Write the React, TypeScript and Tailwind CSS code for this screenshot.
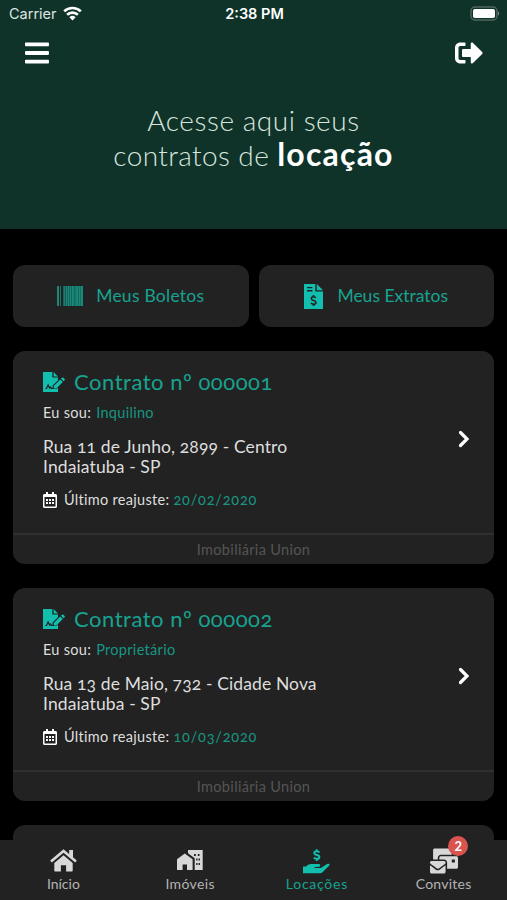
import { FaBars, FaMailBulk, FaRegCalendarAlt, FaSignOutAlt } from "react-icons/fa";

const contracts = [
  { number: "000001", role: "Inquilino", address: "Rua 11 de Junho, 2899 - Centro", date: "20/02/2020" },
  { number: "000002", role: "Proprietário", address: "Rua 13 de Maio, 732 - Cidade Nova", date: "10/03/2020" },
];

function StatusBar() {
  return (
    <div className="grid h-[27px] grid-cols-3 items-center pl-[9px] pr-[7px] font-['Inter',sans-serif] text-white">
      <div className="flex items-center gap-[6px] text-[14.5px] text-[#dce4e1]">
        Carrier
        <svg width="19" height="15" viewBox="0 0 19 15" fill="none" stroke="#fff" strokeWidth="2.6">
          <path d="M1.2 5.4a12 12 0 0 1 16.6 0M4.1 8.8a7.8 7.8 0 0 1 10.8 0" />
          <path d="M9.5 14.4 6.4 11.3a4.5 4.5 0 0 1 6.2 0Z" fill="#fff" stroke="none" />
        </svg>
      </div>
      <p className="text-center text-[14.5px] font-semibold">2:38 PM</p>
      <svg className="justify-self-end" width="30" height="15" viewBox="0 0 30 15">
        <rect x="1" y="1" width="26" height="13" rx="4" fill="none" stroke="#52685f" strokeWidth="1.4" />
        <rect x="3" y="3" width="22" height="9" rx="1.8" fill="#fff" />
        <path d="M28 5.3a2.6 2.6 0 0 1 0 4.4Z" fill="#73877f" />
      </svg>
    </div>
  );
}

function BarcodeIcon() {
  return (
    <svg width="26" height="20" viewBox="0 0 26 20" fill="#168b7c">
      <path d="M0 0h2v20H0zM3 0h.8v20H3zM6.5 0h1.3v20H6.5zM9 0h1v20H9zM10.8 0h1.4v20h-1.4zM13 0h1v20h-1zM14.8 0h2v20h-2zM17.6 0h1v20h-1zM19.2 0h2.1v20h-2.1zM22 0h1v20h-1zM23.6 0H26v20h-2.4z" />
      <path opacity=".5" d="M6.5 0H26v20H6.5z" />
    </svg>
  );
}

function InvoiceIcon() {
  return (
    <svg width="19" height="25" viewBox="0 0 19 25">
      <path fill="#12bfae" d="M0 0h11.3v7.6H19V25H0Z" />
      <path fill="#12bfae" d="M12.8 0 19 6.2h-6.2Z" />
      <path stroke="#222" strokeWidth="1.4" d="M3 3.6h5.4M3 6.7h5.4" />
      <path
        fill="none"
        stroke="#222"
        strokeWidth="1.6"
        d="M11.8 14c-.4-.8-1.2-1.2-2.3-1.2-1.3 0-2.2.7-2.2 1.8 0 2.7 4.6 1.3 4.6 3.8 0 1.1-1 1.8-2.3 1.8-1.1 0-2.1-.4-2.5-1.3M9.5 11v2M9.5 20v2"
      />
    </svg>
  );
}

function SignatureIcon() {
  return (
    <svg width="22" height="20" viewBox="0 0 22 20">
      <path fill="#12bfae" d="M0 0h9.3v5.6H15v2.6l-5.4 5.3V17h4l1.4-1.4V20H0Z" />
      <path fill="#12bfae" d="M10.6 0 15 4.4h-4.4ZM10.8 13.9l6.4-6.4 2.6 2.6-6.4 6.4h-2.6ZM18 6.7l1-1c.4-.4 1-.4 1.4 0l1.2 1.2c.4.4.4 1 0 1.4l-1 1Z" />
      <path fill="none" stroke="#222" strokeWidth="1.2" d="m2.4 16.5 1.1-.1 1.6-3.5 1.6 3.3.9-1.1 1 1.4h2.2" />
    </svg>
  );
}

function HomeIcon() {
  return (
    <svg width="27" height="23" viewBox="0 0 27 23" fill="#d8d8d8">
      <path d="M19.2 1H23v8l-3.8-3.3Z" />
      <path fill="none" stroke="#d8d8d8" strokeWidth="2.6" d="M1 12.6 13.5 2 26 12.6" />
      <path d="m13.5 6.2 9.2 7.8v7.4c0 .7-.4 1.1-1.1 1.1h-5.5v-6.3h-5.2v6.3H5.4c-.7 0-1.1-.4-1.1-1.1V14Z" />
    </svg>
  );
}

function BuildingsIcon() {
  return (
    <svg width="26" height="21" viewBox="0 0 26 21" fill="#d8d8d8">
      <path d="M0 9.2 7.8 3.5l7.8 5.7V20H10v-5.5H5.6V20H0Z" />
      <path d="M11 0h14.7v20h-8V8.2L11 3.2Z" />
      <path fill="#222" d="M17 4h1.8v2H17zM20.8 4h1.7v2h-1.7zM19.2 8.6h1.4v2h-1.4zM21.6 8.6H23v2h-1.4zM19.2 13h1.4v2h-1.4zM21.6 13H23v2h-1.4z" />
    </svg>
  );
}

function HandMoneyIcon() {
  return (
    <svg width="27" height="25" viewBox="0 0 27 25" fill="none">
      <path
        stroke="#12bfae"
        strokeWidth="1.9"
        d="M16.4 3.5c-.5-.9-1.5-1.3-2.7-1.3-1.5 0-2.5.7-2.5 1.8 0 2.8 5.2 1.3 5.2 3.9 0 1.2-1.1 1.9-2.6 1.9-1.3 0-2.4-.4-2.9-1.3M13.7.2v2M13.7 9.8v2.3"
      />
      <path
        fill="#12bfae"
        d="M0 17.4h3.2c1.7-1.5 3.2-2.3 5.2-2.3h7.4c1.8 0 2 2.4.3 2.7l-4.7.4v.8h6.4l5.5-3.6c1.8-1.2 4.2-.2 3 1.2l-6.8 6.6c-.7.6-1.4 1-2.3 1H0Z"
      />
    </svg>
  );
}

function ContractCard({ number, role, address, date }: (typeof contracts)[number]) {
  return (
    <article className="flex h-[213px] shrink-0 flex-col rounded-[12px] bg-[#222]">
      <div className="flex h-[182px] items-center justify-between pl-[30px] pr-[24px]">
        <div className="h-full pt-[18px] tracking-[0.3px] text-[#dedede]">
          <h2 className="flex h-[26px] items-center gap-[9px] text-[22px] tracking-[0.53px] text-[#17a390]">
            <SignatureIcon />
            <span className="-mt-0.5">Contrato nº {number}</span>
          </h2>
          <p className="mt-[8px] text-[14.5px] leading-5">
            Eu sou: <span className="ml-px text-[#179682]">{role}</span>
          </p>
          <p className="mt-[14px] whitespace-nowrap text-[17.5px] leading-5 tracking-[0.12px]">
            {address}
            <br />
            Indaiatuba - SP
          </p>
          <p className="mt-[13px] flex h-5 items-center text-[14.5px]">
            <FaRegCalendarAlt className="mr-[7px] h-4 w-[14px] text-white" />
            Último reajuste:&nbsp;<span className="text-[14.5px] tracking-[0.8px] text-[#179682]">{date}</span>
          </p>
        </div>
        <svg className="mt-[-6px]" width="12" height="18" viewBox="0 0 12 18" fill="none" stroke="#fff" strokeWidth="3.2" strokeLinecap="round">
          <path d="m2.5 2.5 6.5 6.5-6.5 6.5" />
        </svg>
      </div>
      <p className="flex flex-1 items-center justify-center border-t-2 border-[#303030] text-[14.5px] tracking-[0.33px] text-[#555]">
        Imobiliária Union
      </p>
    </article>
  );
}

export default function App() {
  return (
    <main className="flex h-[900px] w-[507px] flex-col overflow-hidden bg-black font-['Lato',sans-serif] oldstyle-nums">
      {/* HEADER */}
      <header className="h-[229px] shrink-0 bg-[#0f3329]">
        <StatusBar />
        <div className="flex h-[52px] items-center justify-between pl-[25px] pr-6 text-white">
          <FaBars className="h-[28px] w-6" />
          <FaSignOutAlt className="h-[28px] w-[28px]" />
        </div>
        <h1 className="mt-[24px] text-center text-[28px] font-light leading-[34px] tracking-[0.55px] text-[#d9e5df]">
          Acesse aqui seus
          <br />
          <span className="tracking-[0.4px]">contratos de </span>
          <strong className="text-[32px] font-bold tracking-[1.2px] text-white">locação</strong>
        </h1>
      </header>

      {/* CONTENT */}
      <section className="flex min-h-0 flex-1 flex-col overflow-hidden px-[13px] pt-9">
        <div className="grid h-[62px] shrink-0 grid-cols-2 gap-[10px] text-[17.5px] text-[#17a390]">
          <button className="flex items-center justify-center gap-[13px] rounded-[12px] bg-[#222] tracking-[0.25px]">
            <BarcodeIcon />
            Meus Boletos
          </button>
          <button className="flex items-center justify-center gap-[14px] rounded-[12px] bg-[#222]">
            <InvoiceIcon />
            Meus Extratos
          </button>
        </div>
        <div className="mt-6 flex flex-col gap-6">
          {contracts.map((contract) => (
            <ContractCard key={contract.number} {...contract} />
          ))}
          <article className="h-[15px] shrink-0 rounded-t-[12px] bg-[#222]" />
        </div>
      </section>

      {/* TABS */}
      <nav className="grid h-[60px] shrink-0 grid-cols-4 bg-[#222] text-[14px] leading-5 text-[#b4b4b4]">
        <a className="flex flex-col items-center">
          <span className="flex h-[34px] items-end pb-[2px]">
            <HomeIcon />
          </span>
          Início
        </a>
        <a className="flex flex-col items-center tracking-[0.35px]">
          <span className="flex h-[34px] items-end pb-[3px]">
            <BuildingsIcon />
          </span>
          Imóveis
        </a>
        <a className="flex flex-col items-center tracking-[0.75px] text-[#17a390]">
          <span className="flex h-[34px] items-end">
            <HandMoneyIcon />
          </span>
          Locações
        </a>
        <a className="relative flex flex-col items-center tracking-[0.25px]">
          <span className="flex h-[34px] items-end">
            <FaMailBulk className="h-[26px] w-[28px] text-[#d8d8d8]" />
          </span>
          Convites
          <span className="absolute left-[68px] top-[-4px] flex size-5 items-center justify-center rounded-full bg-[#d9534f] text-[13px] font-bold lining-nums tracking-normal text-white">
            2
          </span>
        </a>
      </nav>
    </main>
  );
}
